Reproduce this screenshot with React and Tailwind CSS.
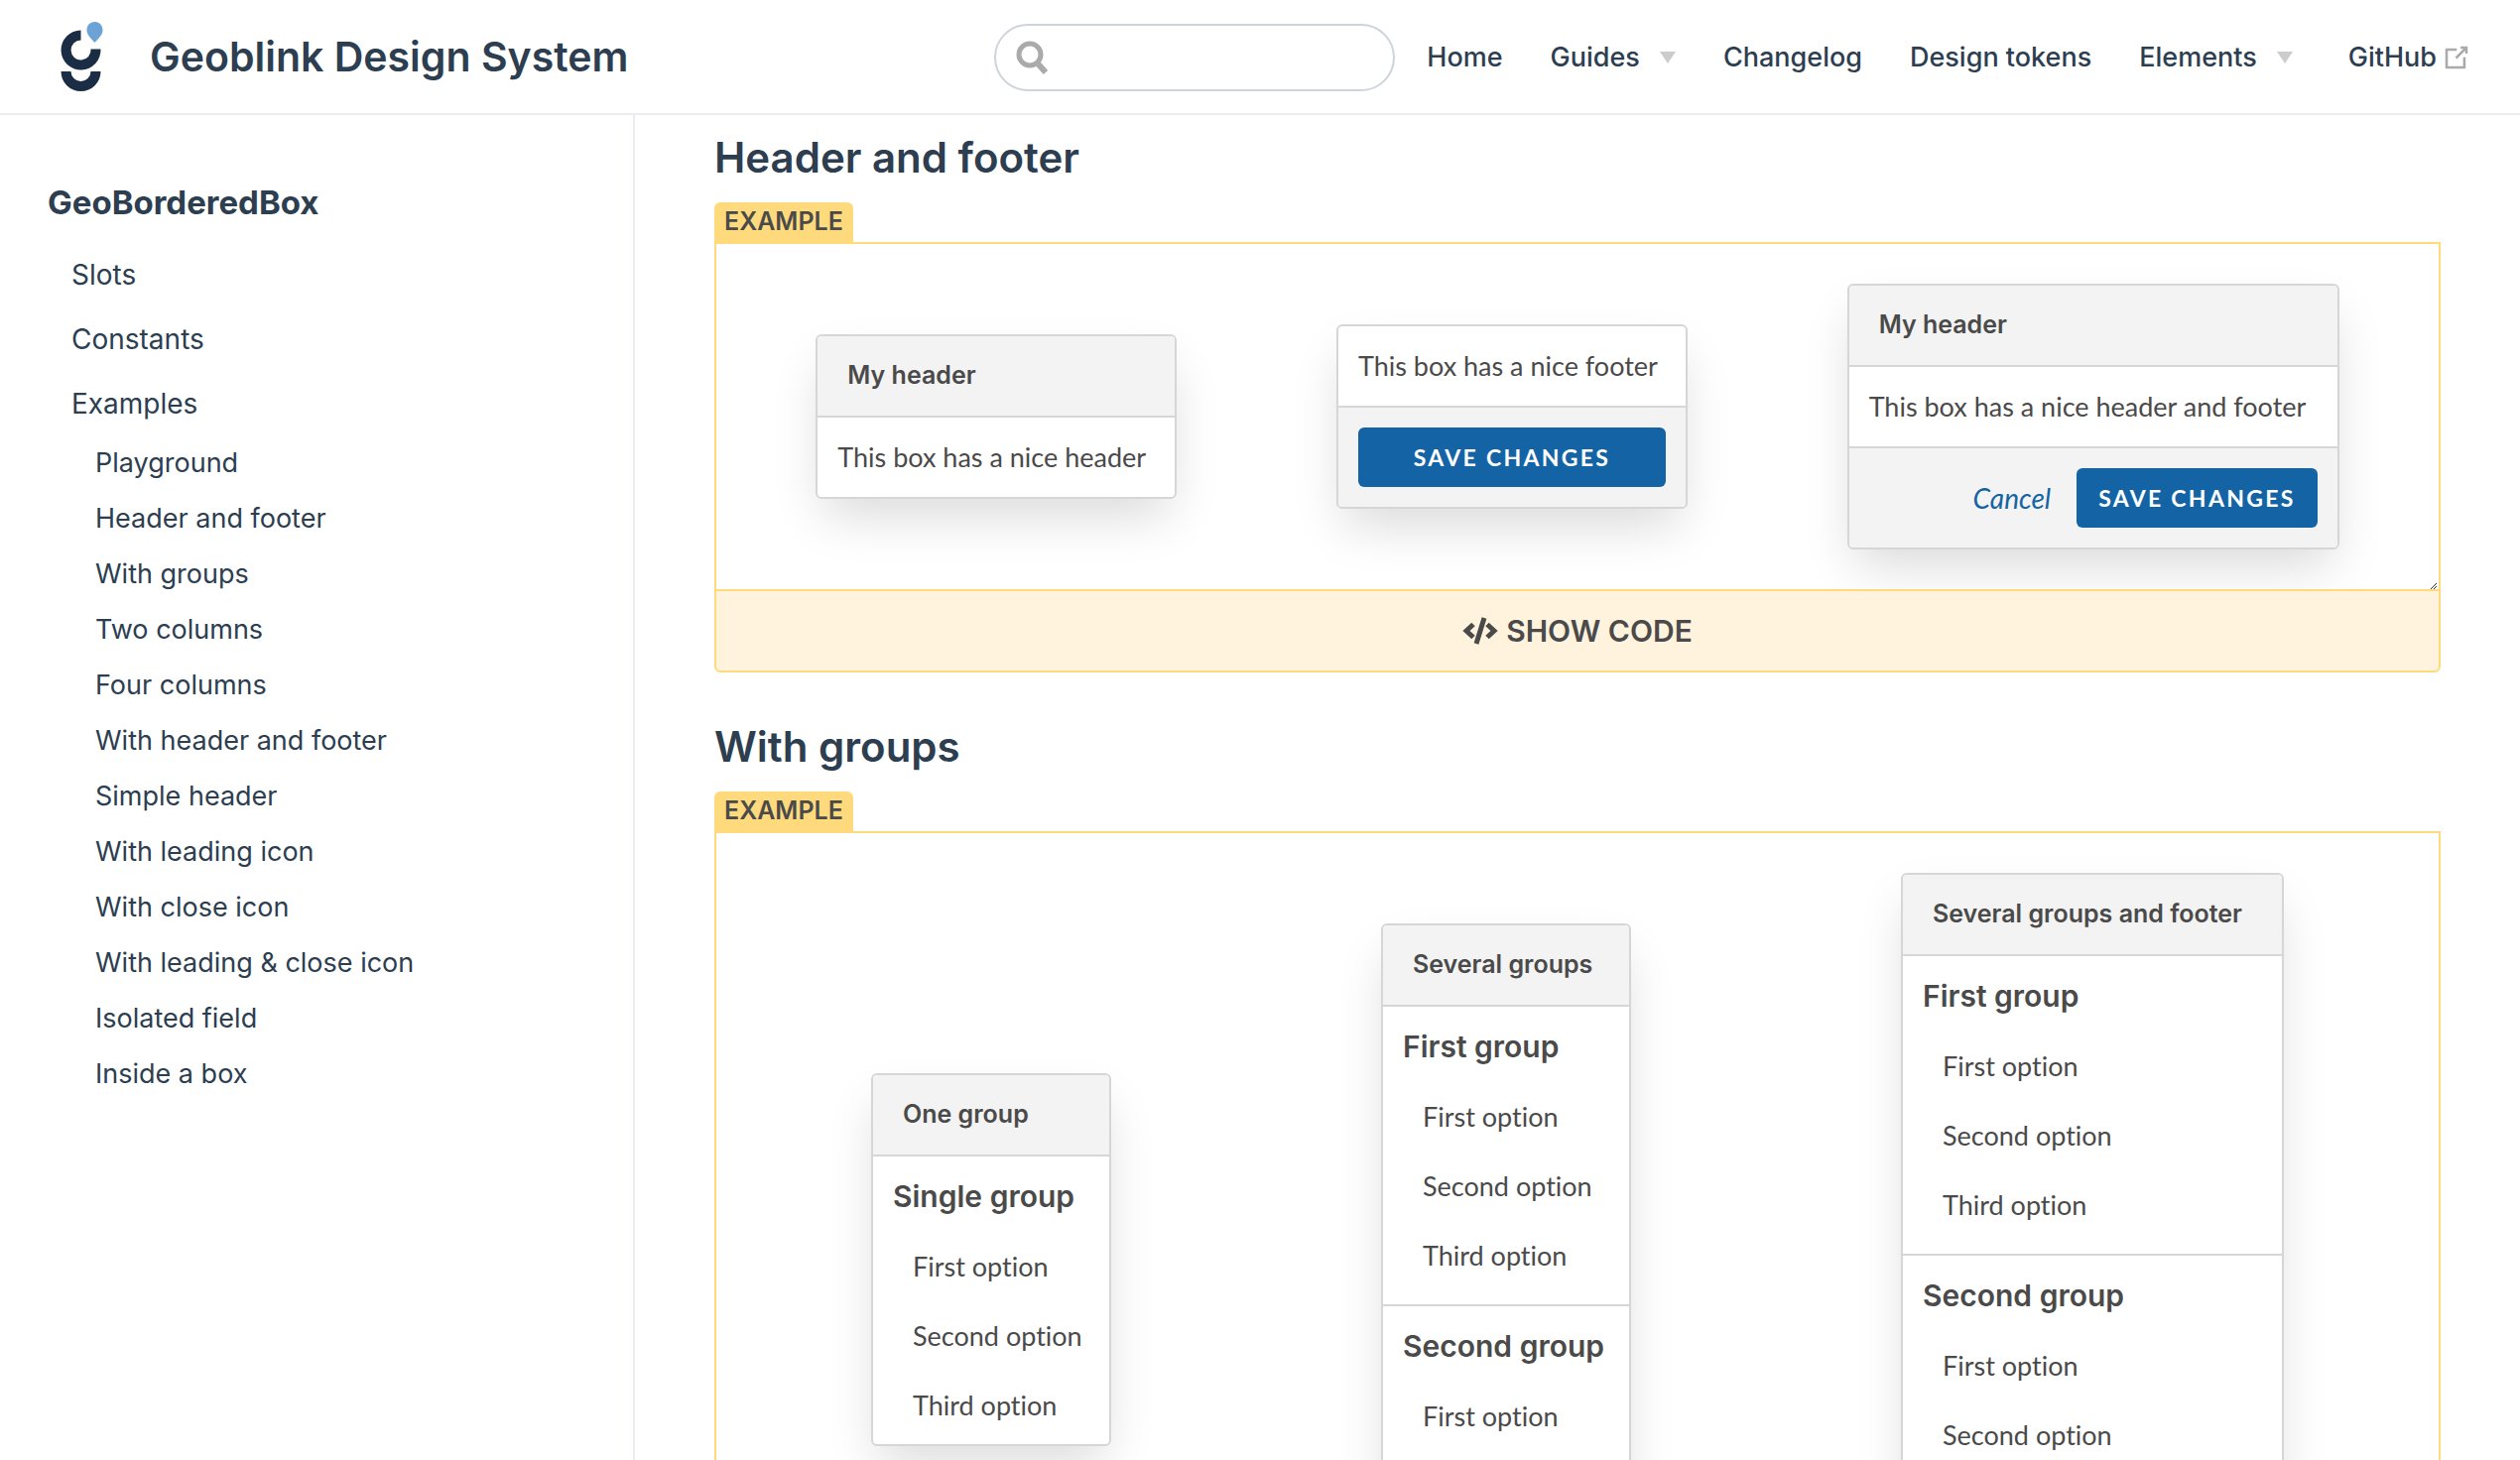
import React from "react";

const navLinks = [
  { name: "Home" },
  { name: "Guides", dropdown: true },
  { name: "Changelog" },
  { name: "Design tokens" },
  { name: "Elements", dropdown: true },
];

const sections = ["Slots", "Constants", "Examples"];

const examples = [
  "Playground",
  "Header and footer",
  "With groups",
  "Two columns",
  "Four columns",
  "With header and footer",
  "Simple header",
  "With leading icon",
  "With close icon",
  "With leading & close icon",
  "Isolated field",
  "Inside a box",
];

const options = ["First option", "Second option", "Third option"];

const Logo = () => (
  <svg viewBox="0 0 44 72" className="w-11 h-[72px]" aria-hidden="true">
    <path d="M20.500 8.500v10a10 10 0 1 0 10 9h10a20 20 0 1 1-20-19Z" fill="#1b2d45" />
    <path d="M0.500 50h10a10 10 0 0 0 20 0h10a20 20 0 0 1-40 0Z" fill="#1b2d45" />
    <path d="M34.500 0C29.500 0 26.500 4 26.500 8.500C26.500 13 31 17 34.500 21C38 17 42.500 13 42.500 8.500C42.500 4 39.500 0 34.500 0Z" fill="#6da2d6" />
  </svg>
);

const Navbar = () => {
  return (
    <header className="flex items-center justify-between shrink-0 h-[116px] pt-0.5 pl-[61px] pr-12 border-b-2 border-[#eaecef] text-[#2c3e50]">
      <a href="#home" className="flex items-center gap-[46px]">
        <Logo />
        <span className="text-[41px] font-semibold">Geoblink Design System</span>
      </a>
      <div className="flex items-center gap-8">
        <label className="relative block">
          <svg viewBox="0 0 32 34" className="absolute left-[22px] top-[17px] w-8 h-[34px]" fill="none" stroke="#aaa" aria-hidden="true">
            <circle cx="14" cy="14" r="11" strokeWidth="5" />
            <path d="M21 22l9 10" strokeWidth="6" />
          </svg>
          <input type="text" aria-label="Search" className="block w-[404px] h-[68px] pl-16 pr-4 text-[27px] rounded-full border-2 border-[#cfd4db] outline-none" />
        </label>
        <nav className="flex items-center gap-12 text-[27px] font-medium">
          {navLinks.map((link) => (
            <a key={link.name} href={`#${link.name}`} className="flex items-center gap-5">
              {link.name}
              {link.dropdown && (
                <span className="border-x-8 border-t-12 border-x-transparent border-t-[#ccc]"></span>
              )}
            </a>
          ))}
          <a href="#github" className="flex items-center gap-1 ml-2">
            GitHub
            <svg viewBox="0 0 100 100" className="size-8" fill="#aaa" aria-hidden="true">
              <path d="M18.800 85.100h56c2.200 0 4-1.800 4-4v-32h-8v28h-48v-48h28v-8h-32c-2.200 0-4 1.800-4 4v56c0 2.200 1.800 4 4 4z" />
              <path d="M45.700 48.700 51.300 54.300 77.200 28.500 77.200 37.200 85.200 37.200 85.200 14.900 62.800 14.900 62.800 22.900 71.500 22.900z" />
            </svg>
          </a>
        </nav>
      </div>
    </header>
  );
};

const Sidebar = () => {
  return (
    <aside className="w-[640px] shrink-0 border-r-2 border-[#eaecef] pt-16 pl-12 text-[#2c3e50]">
      <h2 className="text-[33px] leading-12 font-bold">GeoBorderedBox</h2>
      <ul className="pt-4 pl-6 text-[28px]">
        {sections.map((section) => (
          <li key={section} className="h-[65px] flex items-center">
            <a href={`#${section}`}>{section}</a>
          </li>
        ))}
      </ul>
      <ul className="pl-12 text-[27px]">
        {examples.map((example) => (
          <li key={example} className="h-14 flex items-center">
            <a href={`#${example}`}>{example}</a>
          </li>
        ))}
      </ul>
    </aside>
  );
};

const Box = ({ className = "", header, footer, children }) => {
  return (
    <div className={`rounded-md border-2 border-[#d6d6d6] bg-white shadow-[0_24px_48px_-8px_rgba(0,0,0,0.15)] ${className}`}>
      {header && (
        <div className="h-[82px] flex items-center px-[30px] rounded-t-sm border-b-2 border-[#d6d6d6] bg-[#f3f3f3] font-[Inter,sans-serif] text-[25px] font-semibold">
          {header}
        </div>
      )}
      {children}
      {footer && (
        <div className="flex items-center justify-end gap-[26px] p-5 rounded-b-sm border-t-2 border-[#d6d6d6] bg-[#f3f3f3]">
          {footer}
        </div>
      )}
    </div>
  );
};

const BoxText = ({ children }) => <p className="h-20 flex items-center pl-5 whitespace-nowrap">{children}</p>;

const SaveButton = ({ className = "" }) => (
  <button type="button" className={`h-15 px-[22px] rounded-md bg-[#1464a5] text-white text-[23px] font-bold tracking-widest ${className}`}>
    SAVE CHANGES
  </button>
);

const Group = ({ title }) => (
  <div className="pb-1">
    <h4 className="h-[76px] pt-1 pl-5 flex items-center font-[Inter,sans-serif] text-[30px] font-semibold whitespace-nowrap">{title}</h4>
    <ul className="pl-10">
      {options.map((option) => (
        <li key={option} className="h-[70px] flex items-center">{option}</li>
      ))}
    </ul>
  </div>
);

const TwoGroups = () => (
  <>
    <div className="pb-2.5 border-b-2 border-[#d6d6d6]">
      <Group title="First group" />
    </div>
    <Group title="Second group" />
  </>
);

const Example = ({ title, children }) => {
  return (
    <section className="pb-[50px]">
      <h3 className="h-[70px] text-[42px] leading-[50px] font-semibold text-[#2c3e50]">{title}</h3>
      <div className="text-[#4a4a4a]">
        <span className="inline-flex items-center align-top h-10 px-2.5 rounded-t-md bg-[#ffda7c] text-[25px] font-semibold">EXAMPLE</span>
        <div className="relative border-2 border-b-0 border-[#ffda7c] flex items-center justify-around px-5 py-10 font-[Lato,sans-serif] text-[27px] [font-variant-ligatures:none]">
          {children}
          <svg viewBox="0 0 6 6" className="absolute right-0.5 bottom-0 size-1.5" stroke="#333" strokeWidth="1" aria-hidden="true">
            <path d="M0 6 6 0M3 6 6 3" />
          </svg>
        </div>
        <button type="button" className="relative w-full h-[84px] flex items-center justify-center gap-2 rounded-b-md border-2 border-[#ffda7c] bg-[#fff3dd] text-[30px] font-semibold">
          <svg viewBox="0 0 36 28" className="w-9 h-7" fill="none" stroke="#4a4a4a" strokeWidth="5" aria-hidden="true">
            <path d="M11 7.500 4 14l7 6.500M25 7.500 32 14l-7 6.500M22 1l-8 26" />
          </svg>
          SHOW CODE
        </button>
      </div>
    </section>
  );
};

const App = () => {
  return (
    <div className="h-screen flex flex-col overflow-hidden bg-white font-[Inter,sans-serif]">
      <Navbar />
      <div className="flex flex-1 min-h-0">
        <Sidebar />
        <main className="flex-1 min-w-0 overflow-hidden px-20 pt-[18px]">
          <Example title="Header and footer">
            <Box header="My header" className="w-[364px]">
              <BoxText>This box has a nice header</BoxText>
            </Box>
            <Box className="w-[354px]" footer={<SaveButton className="w-full" />}>
              <BoxText>This box has a nice footer</BoxText>
            </Box>
            <Box
              header="My header"
              className="w-[496px]"
              footer={
                <>
                  <a href="#cancel" className="italic text-[28px] text-[#1464a5]">Cancel</a>
                  <SaveButton />
                </>
              }
            >
              <BoxText>This box has a nice header and footer</BoxText>
            </Box>
          </Example>
          <Example title="With groups">
            <Box header="One group" className="w-[242px]">
              <Group title="Single group" />
            </Box>
            <Box header="Several groups" className="w-[252px]">
              <TwoGroups />
            </Box>
            <Box header="Several groups and footer" className="w-[386px]" footer={<SaveButton className="w-full" />}>
              <TwoGroups />
            </Box>
          </Example>
        </main>
      </div>
    </div>
  );
};

export default App;
